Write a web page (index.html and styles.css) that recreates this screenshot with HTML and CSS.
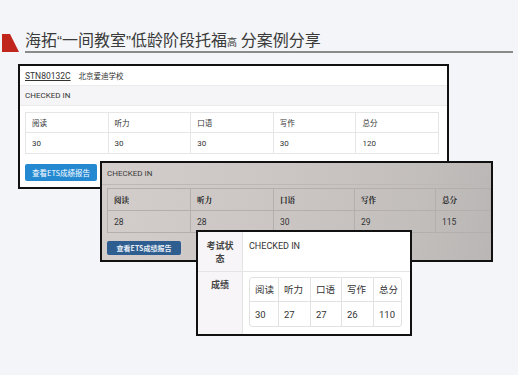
FILE: index.html
```html
<!DOCTYPE html>
<html lang="zh">
<head>
<meta charset="utf-8">
<link rel="stylesheet" href="styles.css">
</head>
<body>
<div class="slide">
  <header class="slide-head">
    <svg class="mark" width="17" height="18" viewBox="0 0 17 18"><polygon points="0,0 8,0 17,18 0,18" fill="#c0261b"/></svg>
    <h1 class="title">海拓<span class="q">“</span>一间教室<span class="q">”</span>低龄阶段托福<span class="small">高</span> 分案例分享</h1>
  </header>

  <section class="win win1">
    <div class="w1-row w1-id"><span class="code">STN80132C</span><span class="school">北京爱迪学校</span></div>
    <div class="w1-row w1-status">CHECKED IN</div>
    <div class="w1-table">
      <div class="cell">阅读</div><div class="cell">听力</div><div class="cell">口语</div><div class="cell">写作</div><div class="cell">总分</div>
      <div class="cell">30</div><div class="cell">30</div><div class="cell">30</div><div class="cell">30</div><div class="cell">120</div>
    </div>
    <div class="w1-btn">查看ETS成绩报告</div>
  </section>

  <section class="win win2">
    <div class="w2-status">CHECKED IN</div>
    <div class="w2-table">
      <div class="cell hd">阅读</div><div class="cell hd">听力</div><div class="cell hd">口语</div><div class="cell hd">写作</div><div class="cell hd">总分</div>
      <div class="cell">28</div><div class="cell">28</div><div class="cell">30</div><div class="cell">29</div><div class="cell">115</div>
    </div>
    <div class="w2-btn">查看ETS成绩报告</div>
  </section>

  <section class="win win3">
    <div class="w3-label w3-r1">考试状态</div>
    <div class="w3-val w3-r1">CHECKED IN</div>
    <div class="w3-label w3-r2">成绩</div>
    <div class="w3-val w3-r2">
      <div class="w3-table">
        <div class="cell">阅读</div><div class="cell">听力</div><div class="cell">口语</div><div class="cell">写作</div><div class="cell">总分</div>
        <div class="cell">30</div><div class="cell">27</div><div class="cell">27</div><div class="cell">26</div><div class="cell">110</div>
      </div>
    </div>
  </section>
</div>
</body>
</html>
```

FILE: styles.css
```css
* { box-sizing: border-box; margin: 0; padding: 0; }
html, body { width: 518px; height: 375px; overflow: hidden; }
body {
  background: #f3f5f8;
  font-family: Roboto, "Noto Sans CJK SC", sans-serif;
  color: #333;
}
.slide { position: relative; width: 518px; height: 375px; padding-top: 30px; }

.slide-head { display: flex; align-items: flex-end; padding-left: 2px; padding-right: 5px; }
.mark { flex: none; margin-right: 6px; }
.title {
  flex: 1;
  font-family: "Noto Sans CJK SC", sans-serif;
  font-weight: 400;
  font-size: 16px;
  line-height: 19px;
  color: #3a3a3a;
  border-bottom: 2px solid #8a8a8a;
  margin-bottom: -1px;
}
.title .q { font-family: "Liberation Sans", sans-serif; font-size: 15px; }
.title .small { font-size: 10px; }

.win { position: absolute; border: 2px solid #111; }

/* window 1 */
.win1 { left: 18px; top: 64px; width: 431px; height: 125px; background: #fff; padding-right: 8px; }
.w1-row { height: 20px; display: flex; align-items: center; padding-left: 5px; font-size: 8px; border-bottom: 1px solid #ebebeb; margin-right: -8px; }
.w1-id { gap: 8px; }
.w1-id .code { text-decoration: underline; color: #333; font-size: 8.5px; }
.w1-id .school { font-family: "Noto Sans CJK SC", sans-serif; font-size: 7.5px; }
.w1-status { background: #f5f5f7; }
.w1-table {
  margin: 6px 0 0 5px;
  display: grid;
  grid-template-columns: repeat(5, 1fr);
  border: 1px solid #e6e6e6;
  border-right: none;
  font-size: 8px;
}
.w1-table .cell { height: 20px; display: flex; align-items: center; padding-left: 6px; border-right: 1px solid #e6e6e6; }
.w1-table .cell:nth-child(-n+5) { border-bottom: 1px solid #e6e6e6; font-family: "Noto Sans CJK SC", sans-serif; font-size: 7.5px; }
.w1-btn {
  margin: 10px 0 0 5px;
  width: 72px; height: 17px;
  background: #2589d2;
  color: #fff;
  border-radius: 2px;
  font-family: "Noto Sans CJK SC", sans-serif;
  font-size: 7.5px;
  display: flex; align-items: center; justify-content: center;
}

/* window 2 */
.win2 {
  left: 100px; top: 161px; width: 393px; height: 101px;
  background: linear-gradient(100deg, #d3cecb 0%, #cbc6c3 45%, #c2bebc 80%, #b9b6b5 100%);
  padding-left: 5px;
}
.w2-status { height: 22px; display: flex; align-items: center; font-size: 8px; color: #3a3a3a; border-bottom: 1px solid #bdb8b5; margin-left: -5px; padding-left: 5px; }
.w2-table {
  margin-top: 3px;
  display: grid;
  grid-template-columns: 83px 83px 81px 81px 1fr;
  border: 1px solid #b3afac;
  border-right: none;
  font-size: 8.5px;
  color: #333;
}
.w2-table .cell { display: flex; align-items: center; padding-left: 6px; border-right: 1px solid #b3afac; height: 21px; }
.w2-table .cell.hd { height: 22px; border-bottom: 1px solid #b3afac; font-family: "Noto Serif CJK SC", "Noto Sans CJK SC", serif; font-weight: 700; font-size: 7.5px; color: #222; }
.w2-btn {
  margin-top: 8px;
  width: 74px; height: 14px;
  background: #2e5e90;
  color: #e8eef5;
  border-radius: 2px;
  font-family: "Noto Sans CJK SC", sans-serif;
  font-weight: 700;
  font-size: 7px;
  display: flex; align-items: center; justify-content: center;
}

/* window 3 */
.win3 {
  left: 196px; top: 230px; width: 216px; height: 106px;
  background: #fff;
  display: grid;
  grid-template-columns: 45px 1fr;
  grid-template-rows: 40px 1fr;
}
.w3-label {
  background: #f7f5f7;
  border-right: 1px solid #e4e4e4;
  font-family: "Noto Sans CJK SC", sans-serif;
  font-weight: 700;
  font-size: 9px;
  line-height: 13px;
  color: #444;
  text-align: center;
  padding: 7px 7px 0;
}
.w3-r1 { border-bottom: 1px solid #e4e4e4; }
.w3-val { padding: 8px 0 0 6px; font-size: 9px; line-height: 13px; color: #333; }
.w3-val.w3-r2 { padding: 5px 8px 0 6px; }
.w3-label.w3-r2 { padding-top: 6px; }
.w3-table {
  display: grid;
  grid-template-columns: 29px 32px 31px 32px 1fr;
  border: 1px solid #e2e2e2;
  border-radius: 3px;
  font-size: 9.5px;
}
.w3-table .cell { height: 24px; display: flex; align-items: center; padding-left: 5px; border-right: 1px solid #e2e2e2; }
.w3-table .cell:nth-child(5n) { border-right: none; }
.w3-table .cell:nth-child(-n+5) { border-bottom: 1px solid #e2e2e2; font-family: "Noto Sans CJK SC", sans-serif; }
```
